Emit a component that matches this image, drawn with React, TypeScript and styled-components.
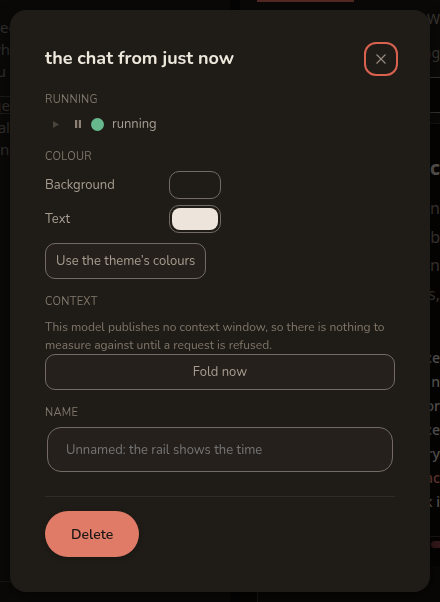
import React, { useState } from "react";
import styled, { createGlobalStyle } from "styled-components";

const GlobalStyle = createGlobalStyle`
  * { box-sizing: border-box; }
  body {
    margin: 0;
    background: #0a0908;
    color: #a79d91;
    font-family: Nunito, "Noto Sans", sans-serif;
    font-size: 13px;
  }
  button, input { font: inherit; }
`;

const Page = styled.div`
  display: grid;
  grid-template-columns: 230px 10px minmax(0, 1fr);
  height: 100vh;
  overflow: hidden;
  font-family: "Noto Sans", sans-serif;
`;

const Rail = styled.aside`
  display: flex;
  flex-direction: column;
  padding-top: 16px;
  background: #0a0908;
  color: #32302d;
  font-size: 15px;
  line-height: 22px;
  white-space: nowrap;
  overflow: hidden;
`;

const RailLine = styled.div`
  display: flex;
  justify-content: flex-end;
  width: 10px;
`;

const RailTag = styled.div`
  margin: 14px 0 2px;
  border: 1px solid #1e1c1a;
  border-left: 0;
  line-height: 16px;
`;

const RailFoot = styled.div`
  margin-top: auto;
  height: 21px;
  border-top: 1px solid #191715;
`;

const Gutter = styled.div`
  background: #050404;
`;

const Main = styled.main`
  display: flex;
  flex-direction: column;
  background: #050403;
  color: #3b3733;
  white-space: nowrap;
  overflow: hidden;
`;

const TopBar = styled.div`
  display: flex;
  flex-direction: column;
  height: 124px;
  border-bottom: 1px solid #151312;
  background: #0a0908;
`;

const ActiveTab = styled.div`
  width: 97px;
  height: 2px;
  margin-left: 17px;
  background: #552822;
`;

const Edge = styled.div<{ $lead: number; $gap?: number; $size?: number; $bold?: boolean; $tone?: string }>`
  align-self: flex-end;
  margin-top: ${(p) => p.$gap ?? 0}px;
  font-size: ${(p) => p.$size ?? 14}px;
  font-weight: ${(p) => (p.$bold ? 700 : 400)};
  line-height: ${(p) => p.$lead}px;
  color: ${(p) => p.$tone ?? "#3b3733"};
`;

const Code = styled.div`
  display: flex;
  flex-direction: column;
  margin-top: 38px;
`;

const CodeLine = styled(Edge)`
  font-weight: 500;
`;

const Field = styled.div`
  height: 36px;
  margin-top: 7px;
  margin-right: -1px;
  border: 1px solid #35312e;
  background: #050403;
`;

const Status = styled.div`
  display: flex;
  justify-content: flex-end;
  margin-top: 22px;
  padding-top: 4px;
  border-top: 1px solid #191615;
`;

const Pill = styled.div`
  width: 9px;
  height: 7px;
  border-radius: 4px 0 0 4px;
  background: #35181a;
`;

const BottomBar = styled.div`
  flex: 1;
  margin: 18px 0 0 17px;
  border-left: 1px solid #191715;
  background: #080706;
`;

const Overlay = styled.div`
  position: fixed;
  inset: 0;
  padding: 10px;
`;

const Dialog = styled.section`
  display: flex;
  flex-direction: column;
  padding: 32px 35px 35px;
  border-radius: 16px;
  background: #1f1c17;
  box-shadow: 0 4px 16px rgba(0, 0, 0, 0.5);
`;

const Header = styled.header`
  display: flex;
  align-items: center;
  justify-content: space-between;
  margin-right: -3px;
`;

const Title = styled.h2`
  margin: 0;
  padding-bottom: 2px;
  font-size: 18px;
  font-weight: 700;
  line-height: 24px;
  color: #ede7dc;
`;

const CloseButton = styled.button`
  display: grid;
  place-items: center;
  width: 34px;
  height: 34px;
  padding: 0;
  border: 2px solid #d9614f;
  border-radius: 12px;
  background: transparent;
  color: #948a7e;
  outline: none;
`;

const Label = styled.h3`
  margin: 0;
  font-size: 11px;
  font-weight: 400;
  line-height: 16px;
  letter-spacing: 0.03em;
  text-transform: uppercase;
  color: #80766b;
`;

const Group = styled.section<{ $top: number }>`
  display: flex;
  flex-direction: column;
  margin-top: ${(p) => p.$top}px;
`;

const RunRow = styled.div`
  display: flex;
  align-items: center;
  height: 20px;
  margin-top: 6px;
`;

const IconButton = styled.button`
  display: grid;
  place-items: center;
  width: 22px;
  height: 20px;
  padding: 0;
  border: 0;
  background: transparent;
  color: #8f8173;
  &:disabled { color: #4a433b; }
`;

const Dot = styled.span`
  width: 13px;
  height: 13px;
  margin: 0 8px 0 2px;
  border-radius: 50%;
  background: #67b88c;
`;

const ColourRow = styled.div`
  display: grid;
  grid-template-columns: 124px 52px;
  align-items: center;
  margin-bottom: 6px;
`;

const Swatch = styled.input`
  appearance: none;
  width: 52px;
  height: 28px;
  padding: 2px;
  border: 1px solid #736b63;
  border-radius: 10px;
  background: #1f1c18;
  &::-webkit-color-swatch-wrapper { padding: 0; }
  &::-webkit-color-swatch { border: 0; border-radius: 8px; }
`;

const OutlineButton = styled.button`
  height: 36px;
  padding: 0 10px;
  border: 1px solid #736b63;
  border-radius: 10px;
  background: #26201c;
  color: #a79d91;
`;

const ThemeButton = styled(OutlineButton)`
  align-self: flex-start;
  margin-top: 4px;
`;

const Note = styled.p`
  margin: 8px 0 0;
  font-size: 12px;
  line-height: 18px;
  color: #80766b;
`;

const NameInput = styled.input`
  height: 45px;
  margin: 6px 2px 0;
  padding: 0 18px;
  border: 1px solid #736b63;
  border-radius: 14px;
  background: #26201c;
  color: #ede7dc;
  outline: none;
  &::placeholder { color: #757575; }
`;

const Footer = styled.footer`
  margin-top: 24px;
  padding-top: 14px;
  border-top: 1px solid #302c27;
`;

const DeleteButton = styled.button`
  height: 46px;
  padding: 0 26px;
  border: 0;
  border-radius: 23px;
  background: #e07b67;
  box-shadow: 0 2px 6px rgba(0, 0, 0, 0.2);
  color: #1b1613;
  font-size: 14px;
  font-weight: 600;
`;

const codeLines = [
  { text: "ice", tone: "#5a5856" },
  { text: "e n", tone: "#5a5856" },
  { text: "or", tone: "#5a5856" },
  { text: "ce", tone: "#5a5856" },
  { text: "ry", tone: "#5a5856" },
  { text: "ac", tone: "#6b3d34" },
  { text: "k i", tone: "#5a5856" },
];

export default function App() {
  const [background, setBackground] = useState("#1f1b17");
  const [text, setText] = useState("#ede5dc");
  return (
    <>
      <GlobalStyle />
      <Page aria-hidden="true">
        <Rail>
          <div>ee</div>
          <RailLine>wh</RailLine>
          <RailLine>u&nbsp;</RailLine>
          <RailTag>
            <RailLine>ge</RailLine>
          </RailTag>
          <RailLine>al</RailLine>
          <div>n</div>
          <RailFoot />
        </Rail>
        <Gutter />
        <Main>
          <TopBar>
            <ActiveTab />
            <Edge $lead={34}>W</Edge>
            <Edge $lead={34}>ng</Edge>
            <Field />
          </TopBar>
          <Edge $gap={28} $lead={32} $size={20} $bold $tone="#5a5754">ec</Edge>
          <Edge $gap={10} $lead={29} $size={16}>en</Edge>
          <Edge $lead={28} $size={16}>b</Edge>
          <Edge $lead={29} $size={16}>an</Edge>
          <Edge $lead={28} $size={16}>s,</Edge>
          <Code>
            {codeLines.map((line) => (
              <CodeLine key={line.text} $lead={24} $tone={line.tone}>{line.text}</CodeLine>
            ))}
          </Code>
          <Status>
            <Pill />
          </Status>
          <BottomBar />
        </Main>
      </Page>
      <Overlay>
        <Dialog role="dialog" aria-labelledby="dialog-title">
          <Header>
            <Title id="dialog-title">the chat from just now</Title>
            <CloseButton aria-label="Close">
              <svg width="10" height="10" viewBox="0 0 10 10" fill="none" stroke="currentColor" strokeWidth="1.2">
                <path d="M0.5 0.5 9.5 9.5M9.5 0.5 0.5 9.5" />
              </svg>
            </CloseButton>
          </Header>

          <Group $top={16}>
            <Label>Running</Label>
            <RunRow>
              <IconButton aria-label="Resume" disabled>
                <svg width="6" height="7" viewBox="0 0 6 7" fill="currentColor">
                  <path d="M0 0 6 3.5 0 7Z" />
                </svg>
              </IconButton>
              <IconButton aria-label="Pause">
                <svg width="6" height="8" viewBox="0 0 6 8" fill="currentColor">
                  <path d="M0 0h2.2v8H0zM3.8 0H6v8H3.8z" />
                </svg>
              </IconButton>
              <Dot />
              <span>running</span>
            </RunRow>
          </Group>

          <Group $top={15}>
            <Label>Colour</Label>
            <Group $top={6}>
              <ColourRow>
                <label htmlFor="background">Background</label>
                <Swatch id="background" type="color" value={background} onChange={(e) => setBackground(e.target.value)} />
              </ColourRow>
              <ColourRow>
                <label htmlFor="text">Text</label>
                <Swatch id="text" type="color" value={text} onChange={(e) => setText(e.target.value)} />
              </ColourRow>
              <ThemeButton>Use the theme’s colours</ThemeButton>
            </Group>
          </Group>

          <Group $top={15}>
            <Label>Context</Label>
            <Note>This model publishes no context window, so there is nothing to measure against until a request is refused.</Note>
            <OutlineButton>Fold now</OutlineButton>
          </Group>

          <Group $top={15}>
            <Label as="label" htmlFor="name">Name</Label>
            <NameInput id="name" placeholder="Unnamed: the rail shows the time" />
          </Group>

          <Footer>
            <DeleteButton>Delete</DeleteButton>
          </Footer>
        </Dialog>
      </Overlay>
    </>
  );
}
